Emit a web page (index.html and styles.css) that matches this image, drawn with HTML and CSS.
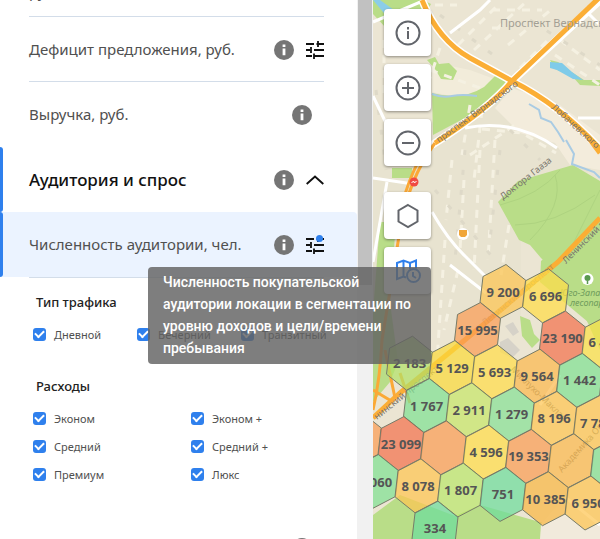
FILE: index.html
```
<!DOCTYPE html>
<html lang="ru">
<head>
<meta charset="utf-8">
<title>Аналитика локаций</title>
<link rel="stylesheet" href="styles.css">
</head>
<body>
<svg class="sprite" aria-hidden="true">
  <symbol id="info" viewBox="0 0 20 20"><circle cx="10" cy="10" r="10" fill="#757575"/><path d="M8.6 4.6h2.8v2.4H8.6zM8.6 8.6h2.8v6.6H8.6z" fill="#fff"/></symbol>
  <symbol id="tune" viewBox="0 0 18 18"><path d="M0 3h8M10.500 3H18M12 0v6M0 9h4M5 6v6M8 9h10M0 15h6M8 12.500v5.500M8 15h10" fill="none" stroke="#111" stroke-width="1.800"/></symbol>
  <symbol id="up" viewBox="0 0 18 10"><path d="M.7 9 9 1.500 17.300 9" fill="none" stroke="#111" stroke-width="1.900"/></symbol>
</svg>
<div class="app">
  <aside class="panel">
    <div class="metrics">
      <section class="metric ruled scrolled"><span class="name">руб.</span></section>
      <section class="metric ruled"><span class="name">Дефицит предложения, руб.</span>
        <button class="icon" aria-label="Справка"><svg class="i20"><use href="#info"/></svg></button>
        <button class="icon" aria-label="Настройки"><svg class="i18"><use href="#tune"/></svg></button></section>
      <section class="metric lone"><span class="name">Выручка, руб.</span>
        <button class="icon" aria-label="Справка"><svg class="i20"><use href="#info"/></svg></button></section>
      <section class="metric marked"><h2 class="name head">Аудитория и спрос</h2>
        <button class="icon" aria-label="Справка"><svg class="i20"><use href="#info"/></svg></button>
        <button class="icon" aria-label="Свернуть"><svg class="chev"><use href="#up"/></svg></button></section>
      <section class="metric marked active"><span class="name">Численность аудитории, чел.</span>
        <button class="icon" aria-label="Справка"><svg class="i20"><use href="#info"/></svg></button>
        <button class="icon dot" aria-label="Настройки"><svg class="i18"><use href="#tune"/></svg></button></section>
    </div>
    <div class="filters">
      <h3>Тип трафика</h3>
      <div class="checks three">
        <label><input type="checkbox" checked>Дневной</label>
        <label><input type="checkbox" checked>Вечерний</label>
        <label><input type="checkbox" checked>Транзитный</label>
      </div>
      <h3 class="next">Расходы</h3>
      <div class="checks two">
        <label><input type="checkbox" checked>Эконом</label>
        <label><input type="checkbox" checked>Эконом +</label>
        <label><input type="checkbox" checked>Средний</label>
        <label><input type="checkbox" checked>Средний +</label>
        <label><input type="checkbox" checked>Премиум</label>
        <label><input type="checkbox" checked>Люкс</label>
      </div>
    </div>
    <section class="metric lone"><span class="name"></span>
      <button class="icon" aria-label="Справка"><svg class="i20"><use href="#info"/></svg></button></section>
    <div class="tooltip" role="tooltip">Численность покупательской аудитории локации в сегментации по уровню доходов и цели/времени пребывания</div>
  </aside>
  <div class="track"><div class="thumb"></div></div>
  <main class="map">
    <svg class="canvas" viewBox="373 0 227 539" preserveAspectRatio="xMinYMin slice">
      <rect x="373" width="1000" height="539" fill="#ebe5d3"/>
      <path d="M373 130h60l30-25 50-20 85 75-17 20-60 60v80H373z" fill="#e8e3d0"/>
      <path d="M432 62 470 70 508 84 470 100 432 92z" fill="#f2ecda"/>
      <path d="M512 88 560 105 600 135v35l-30-5-15-22-35-10-25-25z" fill="#f3ecdc"/>
      <path d="M373 0h50l8 4-7 12-12 12H386L373 14z" fill="#b9dd88"/>
      <path d="M373 0h7l14 10-6 8z" fill="#8bcde8"/>
      <path d="M432 93q30 8 52-6l12-12 15 8-18 20-60 32z" fill="#b9dd88"/>
      <path d="M427 60l8-3 4 7 10-1 8 8-4 9-12-1-6-10z" fill="#b9dd88"/>
      <path d="M498 202 518 181 573 165 600 181V350L573 290 541 258 530 245 519 240z" fill="#b9dd88"/>
      <path d="M541 261 600 212v120l-60-50z" fill="#b9dd88"/>
      <path d="M520 316l10 4 4 14 6 6-8 8-10-12z" fill="#b9dd88"/>
      <path d="M500 342l8-4 12 12-8 8-12-6zM505 326l8-4 6 10-6 4z" fill="#d6d2c8"/>
      <path d="M392 168h20v10h-20zM380 222h16l-6 80 8 60-8 20-17 20v-90z" fill="#b9dd88"/>
      <path d="M373 515 400 495 455 516 480 505 600 539H373z" fill="#b9dd88"/>
      <path d="M541 524 565 497 600 525v14h-60z" fill="#f1eadc"/>
      <path d="M550 60l5 9 18 8 7 8 20 1V80h-16l-14-9-12-9z" fill="#b9dd88"/>
      <path d="M550 62l12 1 10 9 11 8-10-1-16-9-7-2z" fill="#7fcbe9"/>
      <g fill="none" stroke="#f5f1e2" stroke-width="3" stroke-dasharray="8 7">
        <path d="M458 45 500 3M474 50 528 0M492 10h50M492 28h10M508 45l44-36M540 55l50-50M520 68 550 38M560 40l40 30M555 55l45 30M470 105l-8 50M482 110l-8 70M452 160l-6 60M464 180l-4 70M480 150l-6 120M495 140l-7 120M509 225l-8 50M430 70l50 18M440 48l-10 30M470 155l45-30M482 129l40 4 34 20M445 240l-8 120M384 40v60M435 5h22M458 270l-14 60"/>
      </g>
      <g fill="none" stroke="#ded9c8" stroke-width="3" stroke-dasharray="5 15"><path d="M440 15 500 60M530 20l70 45M465 150l-10 110M500 150l-10 90M510 130l30 30M435 190l60 70M376 90l10 80"/></g>
      <g fill="none" stroke="#a9cbe3" stroke-width="2"><path d="M432 94q10 4 20 2t25 0M529 104l10 6 2 8 10 4 7 10 6 10M566 140l8 14-2 10 22 8 6 6"/></g>
      <g fill="none" stroke="#aed380"><path d="M500 205q40-10 60-35M515 225q40 0 80-30M530 240q35-35 25-65M570 250l30-60"/></g>
      <g fill="none" stroke="#fff" stroke-width="3"><path d="M373 22 425 0M450 33 480 10 490 0M373 178l40 6M373 96l12 25M432 212q16 28 34 45l20 20M387 182l-14 80M578 118h22M465 128q50-10 92 20M585 10l15 15M450 265l36 28M560 375l-20 30M565 497l35 28"/></g>
      <g fill="none" stroke="#fff" stroke-width="8"><path d="M422 0Q438 40 470 58L512 81Q560 105 600 149M600 0 512 81Q490 108 432 145"/></g>
      <g fill="none" stroke="#fbae35" stroke-width="5"><path d="M422 0Q438 40 470 58L512 81Q560 105 600 149M600-3 512 81Q490 108 435 143"/><path d="M588 137 600 153M600 218 558 262 460 344 400 393 373 418"/></g>
      <g fill="none" stroke="#fba936" stroke-width="3"><path d="M435 143Q408 180 400 230T382 340Q380 380 373 410M428 145Q405 180 398 225M385 350l10 48M373 390l20 12M400 373l10 30"/></g>
      <g class="road"><text x="500" y="27" class="district">Проспект Вернадского</text>
        <text transform="translate(439 143) rotate(-36)">проспект Вернадского</text>
        <text transform="translate(551 108) rotate(42)">Лобачевского</text>
        <text transform="translate(503 200) rotate(-38)">Доктора Гааза</text>
        <text transform="translate(566 264) rotate(-45)">Ленинский проспект</text>
        <text transform="translate(485 326) rotate(-40)" opacity=".5">Ленинский проспект</text>
        <text transform="translate(377 420) rotate(-39)">нинский проспект</text>
        <text transform="translate(562 473) rotate(-48)">Академика Опарина</text>
        <text transform="translate(510 370) rotate(44)">Миклухо-Маклая</text>
      </g>
      <g class="park"><text x="560" y="296">Юго-Западный</text><text x="570" y="306">лесопарк</text></g>
      <circle cx="587.500" cy="279" r="6" fill="#fff"/><path d="M587.500 284v-3" stroke="#5a9850" stroke-width="1.500"/><circle cx="587.500" cy="278" r="3" fill="#5a9850"/>
      <circle cx="463" cy="234" r="6" fill="#fff"/><path d="M459 230h8v5l-2 2h-4l-2-2z" fill="#f0a63a"/>
      <circle cx="414" cy="182" r="4.500" fill="#f04a43"/><path d="m411.500 183 2-2 1 2 2-2" fill="none" stroke="#fff"/>
      <g id="cells"></g>
    </svg>
    <div class="tools">
      <button aria-label="Информация"><svg viewBox="0 0 26 26"><circle cx="13" cy="13" r="11.500"/><path d="M13 11v8M13 7v2.500"/></svg></button>
      <button aria-label="Приблизить"><svg viewBox="0 0 26 26"><circle cx="13" cy="13" r="11.500"/><path d="M7 13h12M13 7v12"/></svg></button>
      <button aria-label="Отдалить"><svg viewBox="0 0 26 26"><circle cx="13" cy="13" r="11.500"/><path d="M7 13h12"/></svg></button>
      <button class="gap" aria-label="Гексагоны"><svg viewBox="0 0 26 26"><path d="M13 2 22.500 7.500v11L13 24 3.500 18.500v-11z"/></svg></button>
      <button class="blue" aria-label="Карта по времени"><svg viewBox="0 0 26 26"><path d="M11 19.500 8.500 18.500 2 21V5l6.500-2.500L15 5l6-2.500v8M8.500 3v15M15 5v6"/><circle cx="18.500" cy="17.500" r="6.500"/><path d="M18 14v4l3 2"/></svg></button>
    </div>
  </main>
</div>
<script src="map.js"></script>
</body>
</html>
```

FILE: styles.css
```
* { box-sizing: border-box; }
body { margin: 0; font-family: "Noto Sans", sans-serif; color: #505050; background: #fff; }
button { padding: 0; border: 0; background: none; }
h2, h3 { margin: 0; }
.sprite { position: absolute; width: 0; height: 0; }
.app { display: grid; grid-template-columns: 357px 16px minmax(0, 1fr); grid-template-rows: minmax(0, 1fr); height: 100vh; overflow: hidden; }
.panel { position: relative; min-width: 0; }
.metrics { margin-top: -48px; }
.metric { position: relative; display: flex; align-items: center; gap: 12px; height: 65px; padding: 0 33px 0 29px; }
.ruled::after { content: ""; position: absolute; left: 29px; right: 33px; bottom: 0; height: 1px; background: #d3dde9; }
.scrolled { align-items: flex-end; padding-bottom: 14px; }
.lone { padding-right: 45px; }
.name { flex: 1; padding-bottom: 2px; font-size: 15px; line-height: 20px; white-space: nowrap; }
.head { padding-bottom: 0; font-size: 17px; font-weight: 500; color: #111; }
.icon { display: flex; }
.i20 { width: 20px; height: 20px; }
.i18 { width: 18px; height: 18px; }
.chev { width: 18px; height: 10px; }
.marked::before { content: ""; position: absolute; left: 0; top: 0; bottom: 0; width: 3px; border-radius: 0 4px 4px 0; background: #2f80ed; }
.active { background: #ebf3ff; border-radius: 0 4px 4px 0; }
.dot { position: relative; }
.dot::after { content: ""; position: absolute; right: 1px; top: -1px; width: 7px; height: 7px; border-radius: 50%; background: #2f80ed; }
.filters { position: relative; padding: 16px 0 0 33px; height: 238px; }
.filters::before { content: ""; position: absolute; left: 29px; right: 33px; top: 0; height: 1px; background: #d3dde9; }
h3 { padding-left: 3px; font-size: 13px; line-height: 18px; font-weight: 500; color: #222; }
.next { margin-top: 33px; }
.checks { display: grid; row-gap: 8px; margin-top: 13px; }
.three { grid-template-columns: 104px 104px 1fr; }
.two { grid-template-columns: 158px 1fr; }
label { display: flex; align-items: center; gap: 8px; height: 20px; font-size: 11px; white-space: nowrap; }
input { appearance: none; width: 13px; height: 13px; margin: 0; border-radius: 3px; background: #2f80ed; display: grid; place-items: center; }
input::before { content: ""; width: 7px; height: 4px; border: solid #fff; border-width: 0 0 2px 2px; transform: translateY(-1px) rotate(-45deg); }
.tooltip { position: absolute; z-index: 3; left: 148px; top: 267px; width: 283px; padding: 4px 15px 5px; border-radius: 4px; background: rgba(97, 97, 97, .82); color: #fff; font: 500 14px/22px Roboto, sans-serif; }
.track { background: #f1f1f1; }
.thumb { width: 14px; height: 285px; margin-left: 1px; background: #c1c1c1; }
.map { position: relative; min-width: 0; overflow: hidden; }
.canvas { display: block; width: 100%; height: 100%; }
.road text { font-size: 9px; fill: #77736b; }
.road .district { font-size: 11px; fill: #a39f94; }
.park text { font-size: 9px; font-style: italic; fill: #6f9c5c; }
.cell { stroke: #777b68; stroke-width: 1; fill-opacity: .72; }
.value { font-size: 13px; font-weight: 700; fill: #555; text-anchor: middle; }
.tools { position: absolute; left: 11px; top: 9px; display: flex; flex-direction: column; gap: 8px; }
.tools button { display: grid; place-items: center; width: 47px; height: 47px; border-radius: 4px; background: #fff; box-shadow: 0 1px 3px rgba(0, 0, 0, .4); }
.tools svg { width: 26px; height: 26px; fill: none; stroke: #62656b; stroke-width: 2; }
.tools .gap { margin-top: 18px; }
.tools .blue svg { stroke: #2f80ed; }
```

FILE: map.js
```
const ORANGE = "#fbb84e", DEEP = "#fa9c55", RED = "#f2714e", YELLOW = "#ffdc4a", LIME = "#c6e66a", GREEN = "#7fe093", TEAL = "#6cdc9d";
const cells = [
  [0, 0, "#fcc552", "9 200"], [1, 0, "#ffdc48", "6 696"],
  [0, 1, DEEP, "15 995"], [2, 1, RED, "23 190"], [3, 1, "#fae048", "6 433"],
  [-1, 2, "#b2e068", "2 183"], [0, 2, "#fada3c", "5 129"], [1, 2, YELLOW, "5 693"], [2, 2, ORANGE, "9 564"], [3, 2, GREEN, "1 442"],
  [0, 3, GREEN, "1 767"], [1, 3, LIME, "2 911"], [2, 3, "#86e096", "1 279"], [3, 3, "#fec552", "8 196"], [4, 3, "#fec552", "7 782"],
  [-1, 4, DEEP, ""], [0, 4, RED, "23 099"], [1, 4, DEEP, ""], [2, 4, YELLOW, "4 596"], [3, 4, DEEP, "19 353"], [4, 4, ORANGE, ""], [5, 4, GREEN, ""],
  [0, 5, "#7fe093", "1 060"], [1, 5, "#fec552", "8 078"], [2, 5, "#bae66c", "1 807"], [3, 5, TEAL, "751"], [4, 5, "#f8b744", "10 385"], [5, 5, "#fec552", "6 950"],
  [2, 6, TEAL, "334"]
];
const corners = [[20, 15], [-3, 27], [-23, 11], [-20, -15], [3, -27], [23, -11]];
const ns = "http://www.w3.org/2000/svg";
const layer = document.getElementById("cells");
for (const [i, j, color, value] of cells) {
  const x = 503 + i * 42.5 - j * 25.5;
  const y = 291.5 + i * 4.3 + j * 38;
  const hex = document.createElementNS(ns, "polygon");
  hex.setAttribute("class", "cell");
  hex.setAttribute("fill", color);
  hex.setAttribute("points", corners.map(([dx, dy]) => `${x + dx},${y + dy}`).join(" "));
  layer.append(hex);
  const text = document.createElementNS(ns, "text");
  text.setAttribute("class", "value");
  text.setAttribute("x", x);
  text.setAttribute("y", y + 5);
  text.textContent = value;
  layer.append(text);
}
```
